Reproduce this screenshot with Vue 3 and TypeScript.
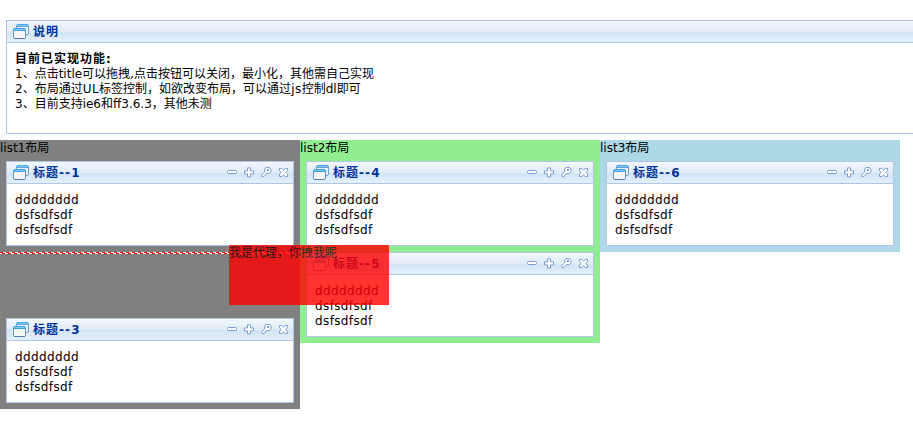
<script setup lang="ts">
import { h } from 'vue'

interface Portlet { title: string; gap?: boolean }
interface Column { label: string; tone: string; items: Portlet[] }

const columns: Column[] = [
  { label: 'list1', tone: 'gray', items: [{ title: '1' }, { title: '', gap: true }, { title: '3' }] },
  { label: 'list2', tone: 'green', items: [{ title: '4' }, { title: '5' }] },
  { label: 'list3', tone: 'blue', items: [{ title: '6' }] },
]
const lines: string[] = ['dddddddd', 'dsfsdfsdf', 'dsfsdfsdf']

const WindowsIcon = () =>
  h('svg', { width: 16, height: 15, viewBox: '0 0 16 15', 'shape-rendering': 'crispEdges' }, [
    h('path', { d: 'M3 1h13v9H3z', fill: '#6ba2d6' }),
    h('path', { d: 'M4 0h11v1H4zM3 1h13v1H3z', fill: '#4aa9e6' }),
    h('path', { d: 'M4 1h11v1H4z', fill: '#7cc8f3' }),
    h('path', { d: 'M4 3h11v7H4z', fill: '#eaf3fb' }),
    h('path', { d: 'M12 10h3v1h-3z', fill: '#6b9dcc' }),
    h('path', { d: 'M0 5h13v9H0z', fill: '#6b93bd' }),
    h('path', { d: 'M1 4h11v1H1zM0 5h13v2H0z', fill: '#3d9fe0' }),
    h('path', { d: 'M1 5h11v1H1z', fill: '#84cbf3' }),
    h('path', { d: 'M1 7h11v7H1z', fill: '#f6f5f4' }),
    h('path', { d: 'M1 14h11v1H1z', fill: '#557eac' }),
  ])
</script>

<template>
  <main class="page">
    <section class="panel notes">
      <header class="bar"><WindowsIcon class="icon" /><b class="cjk">说明</b></header>
      <div class="body">
        <b><span class="cjk">目前已实现功能</span>:</b>
        <p>1、点击title可以拖拽,点击按钮可以关闭，最小化，其他需自己实现</p>
        <p>2、布局通过<span class="wide">UL</span>标签控制，如欲改变布局，可以通过<span class="wide">js</span>控制dl即可</p>
        <p>3、目前支持ie6和ff3.6.3，其他未测</p>
      </div>
    </section>

    <div class="columns">
      <section v-for="col in columns" :key="col.label" class="column" :class="col.tone">
        <div class="label">{{ col.label }}布局</div>
        <template v-for="(item, i) in col.items" :key="i">
          <div v-if="item.gap" class="slot">
            <svg width="300" height="2" shape-rendering="crispEdges">
              <defs>
                <pattern id="ants" width="6" height="2" patternUnits="userSpaceOnUse">
                  <rect width="6" height="2" fill="#fff" />
                  <path d="M0 0h3v1H0zM2 1h3v1H2z" fill="#f00" />
                </pattern>
              </defs>
              <rect width="300" height="2" fill="url(#ants)" />
            </svg>
          </div>
          <article v-else class="panel">
            <header class="bar">
              <WindowsIcon class="icon" />
              <b><span class="cjk">标题</span><span class="dashes">--</span>{{ item.title }}</b>
              <svg class="tools" width="62" height="11" viewBox="0 0 62 11">
                <g fill="#fff" stroke="#7b9bd2" stroke-width="1">
                  <rect x="0.5" y="3.5" width="9" height="3" rx="1" />
                  <path d="M20.5 .9h3v3h3v3h-3v3h-3v-3h-3v-3h3z" stroke-linejoin="round" />
                  <path d="M37.8 1.5l1.4-1h3l1.8 1.7v2.6l-1.6 1.7h-2.8l-2.7 3.1-1.9-.2-.2-1.7 2.7-2.7z" stroke-linejoin="round" />
                  <path d="M52.5 1.5h2.2l1.8 1.6 1.8-1.6h2.2v2.1l-1.6 1.9 1.6 1.8v2.2h-2.2l-1.8-1.6-1.8 1.6h-2.2V7.3l1.6-1.8-1.6-1.9z" stroke-linejoin="round" />
                </g>
                <rect x="40" y="2" width="2" height="2" fill="#7b9bd2" />
              </svg>
            </header>
            <div class="body latin"><p v-for="(line, n) in lines" :key="n">{{ line }}</p></div>
          </article>
        </template>
      </section>
    </div>
    <div class="proxy">我是代理，你拽我呢</div>
  </main>
</template>

<style>
body { background: #fff; overflow: hidden; }
</style>

<style scoped>
.page {
  position: relative;
  width: 913px;
  height: 441px;
  box-sizing: border-box;
  padding-top: 20px;
  overflow: hidden;
  font: 12px/15px Verdana, "DejaVu Sans", "Noto Sans CJK SC", sans-serif;
  color: #000;
  white-space: nowrap;
}
.panel {
  box-sizing: border-box;
  width: 288px;
  height: 85px;
  margin: 0 6px 6px;
  border: 1px solid #b1c6e4;
  background: #fff;
}
.notes { width: 920px; height: 114px; }
.bar {
  display: flex;
  align-items: flex-start;
  box-sizing: border-box;
  height: 22px;
  padding: 3px 4px 0 6px;
  border-bottom: 1px solid #b1c6e4;
  background: linear-gradient(#f2f7fc 0, #dfebf7 52%, #d2e4f5 55%, #e4f0fc 100%);
  color: #039;
}
.icon { flex: none; margin-right: 4px; }
.bar b { padding-top: 1px; }
.cjk { letter-spacing: 1px; }
.dashes { letter-spacing: 1.1px; }
.tools { margin: 2px 0 0 auto; }
.body { padding: 9px 8px 0; }
.body p { margin: 0; }
.latin { letter-spacing: 0.38px; }
.wide { letter-spacing: 0.5px; }
.columns { display: flex; align-items: flex-start; }
.column { width: 300px; }
.label { box-sizing: border-box; height: 15px; padding-top: 1px; margin-bottom: 6px; }
.gray { background: #808080; }
.green { background: #90ee90; }
.blue { background: #add8e6; }
.slot { height: 60px; margin-bottom: 6px; }
.slot svg { display: block; }
.proxy {
  position: absolute;
  left: 229px;
  top: 245px;
  box-sizing: border-box;
  width: 160px;
  height: 60px;
  padding-top: 1px;
  background: #f00;
  opacity: 0.8;
}
</style>
